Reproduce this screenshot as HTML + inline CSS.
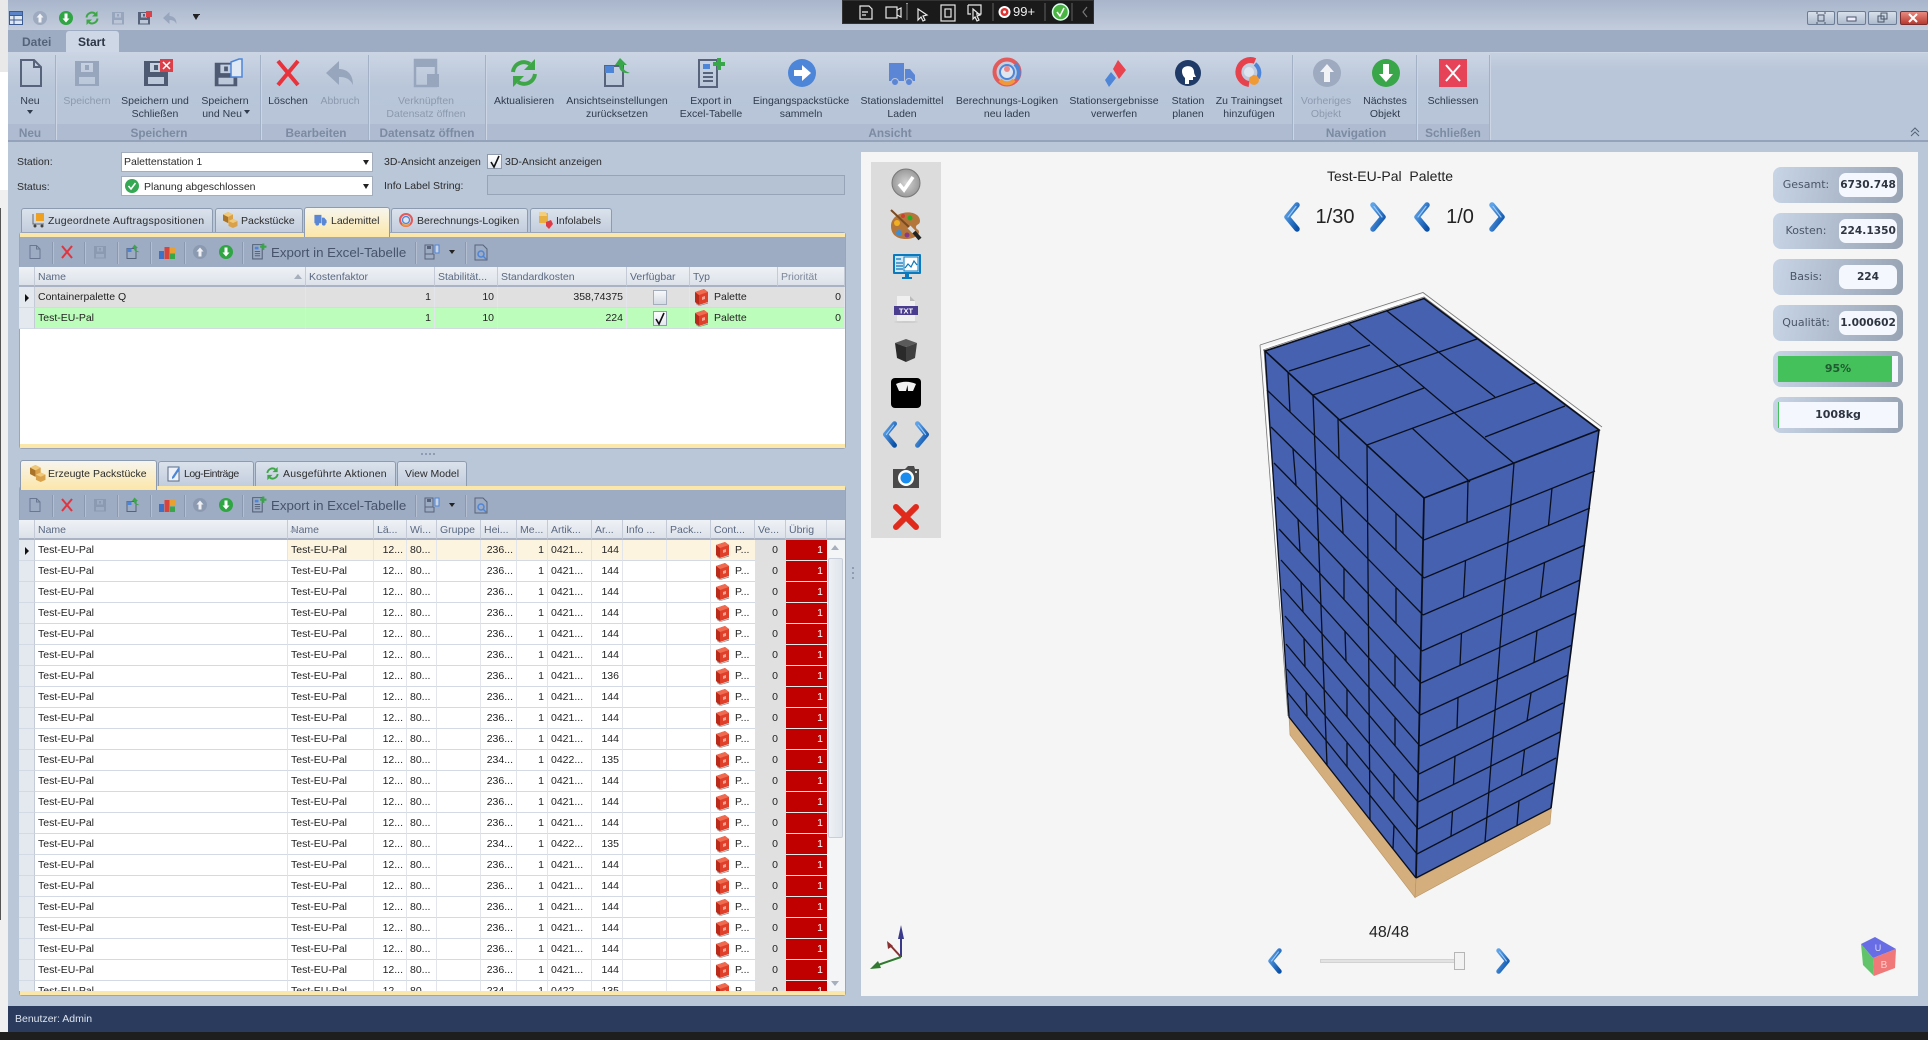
<!DOCTYPE html>
<html lang="de"><head><meta charset="utf-8"><title>Palette</title>
<style>
html,body{margin:0;padding:0;width:1928px;height:1040px;overflow:hidden;background:#bac7d8;font:10.5px "Liberation Sans",sans-serif;color:#2b2b2b}
*{box-sizing:border-box}
.a{position:absolute}
.t{position:absolute;white-space:nowrap;line-height:14px}
svg{position:absolute;overflow:visible}
.rb{position:absolute;top:95px;transform:translateX(-50%);text-align:center;line-height:13px;white-space:nowrap;color:#2f3a4c}
.rb.d{color:#8c99ae}
.gl{position:absolute;top:126px;transform:translateX(-50%);font-weight:bold;font-size:11.8px;color:#7c8aa2;white-space:nowrap;line-height:14px}
.gb{position:absolute;top:124px;height:16px;background:#aebbd0}
.sep{position:absolute;top:55px;height:85px;width:1px;background:#a3b1c7;box-shadow:1px 0 0 #cbd5e3}
.tab{position:absolute;border:1px solid #8d9bb0;border-bottom:0;border-radius:3px 3px 0 0;background:linear-gradient(#dbe2ec,#c2cddd)}
.tab.on{background:linear-gradient(#f6f5ee,#fce7a8);z-index:3}
.tbsep{position:absolute;top:5px;height:22px;width:1px;background:#8a98b0;box-shadow:1px 0 0 #b3bfd1}
table{border-collapse:separate;border-spacing:0;table-layout:fixed;position:absolute;left:0;top:0;width:826px}
th{height:20px;font-weight:normal;text-align:left;padding:1px 3px 0;background:linear-gradient(#eff2f6,#dde2ea);border-right:1px solid #c4cbd7;border-bottom:2px solid #a9b3c3;color:#5a6880;white-space:nowrap;overflow:hidden}
td{height:21px;padding:0 3px;border-right:1px solid #e2e6ec;border-bottom:1px solid #d4dae3;white-space:nowrap;overflow:hidden;color:#222;background:#fff}
td.i{background:#e4e8ef;border-right:1px solid #c4cbd7;padding:0;position:relative}
.r{text-align:right}
tr.f td{background:#fdf4e0}
tr.f td.n{background:#fff}
tr.f td.i{background:#e4e8ef}
td.v,tr.f td.v{background:#e0e0e0;border-right:0;text-align:right;border-bottom:1px solid #e0e0e0;padding-right:8px}
td.u,tr.f td.u{background:#c00000;color:#fff;text-align:right;border-right:0;border-bottom:1px solid #e8e8e8;padding-right:4px}
td.c{padding:0 0 0 24px;position:relative;border-right:0}
.tri{position:absolute;left:6px;top:7px;width:0;height:0;border-left:4px solid #111;border-top:4px solid transparent;border-bottom:4px solid transparent}
.stat{position:absolute;left:1773px;width:130px;height:36px;border-radius:8px;background:linear-gradient(100deg,#c8d5e7,#97a3b3)}
.stat .k{position:absolute;left:0;width:66px;text-align:center;top:11px;font:11px/14px "DejaVu Sans",sans-serif;color:#4a5568}
.stat .w{position:absolute;left:66px;top:6px;width:58px;height:24px;background:#f4f8fe;border-radius:7px;text-align:center;font:bold 10.6px/24px "DejaVu Sans",sans-serif;color:#2e3540;white-space:nowrap;overflow:hidden}
</style></head><body>
<svg width="0" height="0" style="position:absolute">
<defs>
<linearGradient id="cb" x1="0" x2="1" y1="0" y2="1"><stop offset="0" stop-color="#5fa4e8"/><stop offset="1" stop-color="#0a50a8"/></linearGradient>
<symbol id="doc" viewBox="0 0 32 32"><path d="M6 3h13l7 7v19H6zM19 3v7h7" fill="none" stroke="currentColor" stroke-width="2"/></symbol>
<symbol id="fl" viewBox="0 0 32 32"><path fill="currentColor" fill-rule="evenodd" d="M4 4h24v25H4zM10 6v9h12V6zM8 20v7h16v-7zM14 8h4v5h-4z"/></symbol>
<symbol id="back" viewBox="0 0 32 32"><path fill="currentColor" d="M15 4v8c8 0 14 5 14 16-3-6-7-8-14-8v8L2 16z"/></symbol>
<symbol id="up" viewBox="0 0 32 32"><circle cx="16" cy="16" r="14" fill="currentColor"/><path fill="#fff" d="M16 7l7 8h-4v10h-6V15H9z" opacity=".85"/></symbol>
<symbol id="dn" viewBox="0 0 32 32"><circle cx="16" cy="16" r="14" fill="currentColor"/><path fill="#fff" d="M16 25l-7-8h4V7h6v10h4z"/></symbol>
<symbol id="ref" viewBox="0 0 32 32"><g fill="none" stroke="currentColor" stroke-width="4"><path d="M5 15A11 11 0 0 1 22 7"/><path d="M27 17A11 11 0 0 1 10 25"/></g><path fill="currentColor" d="M27 2v11H16zM5 30V19h11z"/></symbol>
<symbol id="view" viewBox="0 0 32 32"><path d="M4 9h18v20H4z" fill="none" stroke="#56637a" stroke-width="2"/><path d="M4 9h9v7H4z" fill="#4d86d9"/><path fill="#3aa64a" d="M19 1l7 7h-4c0 5 2 6 7 8-7 1-11-2-11-8h-4z"/></symbol>
<symbol id="xls" viewBox="0 0 32 32"><path d="M5 3h18v27H5z" fill="none" stroke="#56637a" stroke-width="2"/><path d="M9 7h7v5H9z" fill="#4d86d9"/><path d="M9 16h10M9 20h10M9 24h10" stroke="#56637a" stroke-width="2"/><path fill="#3aa64a" d="M23 1h4v4h4v4h-4v4h-4V9h-4V5h4z"/></symbol>
<symbol id="x" viewBox="0 0 32 32"><path d="M6 4l20 24M26 4L6 28" stroke="currentColor" stroke-width="4" fill="none"/></symbol>
<symbol id="box" viewBox="0 0 15 18"><path fill="#e0402a" d="M1 4l9-3 4 3v10l-9 3-4-3z"/><path fill="#b82a1a" d="M1 4l4 3v10l-4-3z"/><path fill="#f06a50" d="M1 4l9-3 4 3-9 3z"/><path fill="#f5a393" d="M8 9l3-1v3l-3 1z"/><path fill="#888" d="M2 15l3 2.500 9-3v1l-9 2.500-3-2z"/></symbol>
<symbol id="l" viewBox="0 0 20 30"><path d="M15 3L5 15l10 12" fill="none" stroke="url(#cb)" stroke-width="5.500" stroke-linecap="round" stroke-linejoin="round"/><path d="M14 4.500L6 15" fill="none" stroke="#9cc9f5" stroke-width="1.200" stroke-linecap="round"/></symbol>
<symbol id="r" viewBox="0 0 20 30"><path d="M5 3l10 12L5 27" fill="none" stroke="url(#cb)" stroke-width="5.500" stroke-linecap="round" stroke-linejoin="round"/><path d="M6 4.500L14 15" fill="none" stroke="#9cc9f5" stroke-width="1.200" stroke-linecap="round"/></symbol>
<symbol id="pack" viewBox="0 0 16 16"><path fill="#d9a24a" d="M6 0l5 2.500v6L6 11 1 8.500v-6z"/><path fill="#f0c87a" d="M6 0l5 2.500L6 5 1 2.500z"/><path fill="#a9742a" d="M6 5v6L1 8.500v-6z"/><path fill="#d9a24a" d="M11 7l4.500 2v5L11 16l-4.500-2V9z"/><path fill="#f0c87a" d="M11 7l4.500 2L11 11 6.500 9z"/></symbol>
</defs></svg>

<!-- left strip -->
<div class="a" style="left:0;top:0;width:8px;height:72px;background:#e9e9e9"></div>
<div class="a" style="left:0;top:72px;width:8px;height:118px;background:#fff"></div>
<div class="a" style="left:0;top:190px;width:8px;height:842px;background:#f0f0f0"></div>
<div class="a" style="left:0;top:208px;width:1px;height:712px;background:#555"></div>

<!-- title bar -->
<div class="a" style="left:8px;top:0;width:1920px;height:30px;background:linear-gradient(#a8b5cb,#c2ccdc)"></div>
<svg style="left:9px;top:11px" width="14" height="14" viewBox="0 0 14 14"><rect x=".5" y=".5" width="13" height="13" fill="#dfe7f2" stroke="#3c5a92"/><path d="M.5 4.500h13M.5 9h13M5 4.500V14" stroke="#3c5a92"/><rect x="1" y="1" width="12" height="3" fill="#5b83c8"/></svg>
<svg style="left:32px;top:10px;color:#9daabf" width="16" height="16"><use href="#up"/></svg>
<svg style="left:58px;top:10px;color:#2fa544" width="16" height="16"><use href="#dn"/></svg>
<svg style="left:84px;top:10px;color:#3fa648" width="16" height="16"><use href="#ref"/></svg>
<svg style="left:110px;top:10px;color:#98a6bd" width="16" height="16"><use href="#fl"/></svg>
<svg style="left:136px;top:10px;color:#56637a" width="16" height="16"><use href="#fl"/></svg>
<div class="a" style="left:146px;top:11px;width:6px;height:6px;background:#d8434b"></div>
<svg style="left:162px;top:10px;color:#98a6bd" width="16" height="16"><use href="#back"/></svg>
<div class="a" style="left:193px;top:15px;width:0;height:0;border:3px solid transparent;border-top:5px solid #222"></div>
<div class="a" style="left:193px;top:14px;width:7px;height:1px;background:#222"></div>

<!-- dark capture toolbar -->
<div class="a" style="left:842px;top:0;width:252px;height:24px;background:#1a1a1a;border:1px solid #333"></div>
<svg style="left:842px;top:0" width="252" height="24" fill="none" stroke="#e8e8e8" stroke-width="1.200">
<path d="M18 6h9l3 3v10H18zM20 12h6M20 15h4"/>
<rect x="44" y="7" width="11" height="11"/><path d="M55 10l4-2v9l-4-2"/>
<path d="M65 3v17M76 9l9 6-4 1 2 4-2 1-2-4-3 3z" /><rect x="99" y="5" width="14" height="16"/><rect x="103" y="9" width="6" height="8"/>
<path d="M126 5h13v9h-5M126 5v9h3M131 9l7 6-3 1 2 4-2 1-2-4-2 2z"/>
<path d="M65 4v16M151 3v18M203 3v18M230 3v18" stroke="#555"/>
<path d="M245 7l-4 5 4 5" stroke="#777"/></svg>
<svg style="left:997px;top:4px" width="15" height="16" viewBox="0 0 15 16"><circle cx="7.500" cy="8" r="6" fill="#fff"/><circle cx="7.500" cy="8" r="4" fill="#d33"/><circle cx="7.500" cy="8" r="1.500" fill="#fff"/></svg>
<div class="t" style="left:1013px;top:5px;color:#eee;font-size:13px">99+</div>
<svg style="left:1052px;top:3px" width="17" height="18" viewBox="0 0 17 18"><circle cx="8.500" cy="9" r="8" fill="#4bb543" stroke="#dfe" stroke-width="1.500"/><path d="M5 9l3 4 4-8" fill="none" stroke="#fff" stroke-width="1.500"/></svg>

<!-- window buttons -->
<div class="a" style="left:1807px;top:11px;width:28px;height:14px;border:1px solid #6d7c95;background:linear-gradient(#d8e0eb,#aebbce);border-radius:2px"></div>
<div class="a" style="left:1837px;top:11px;width:29px;height:14px;border:1px solid #6d7c95;background:linear-gradient(#d8e0eb,#aebbce);border-radius:2px"></div>
<div class="a" style="left:1868px;top:11px;width:29px;height:14px;border:1px solid #6d7c95;background:linear-gradient(#d8e0eb,#aebbce);border-radius:2px"></div>
<div class="a" style="left:1900px;top:11px;width:28px;height:14px;border:1px solid #7a3030;background:linear-gradient(#e88a80,#b83a30);border-radius:2px"></div>
<svg style="left:1807px;top:11px" width="121" height="14" fill="none" stroke="#4a5568"><rect x="11" y="4" width="6" height="6"/><path d="M9 2h2M17 2h2M9 12h2M17 12h2"/><rect x="40" y="6" width="9" height="4" fill="#eef"/><rect x="71" y="5" width="6" height="6"/><rect x="74" y="2" width="6" height="6"/><path d="M102 3l8 8M110 3l-8 8" stroke="#fff" stroke-width="2"/></svg>

<!-- ribbon tabs row -->
<div class="a" style="left:8px;top:30px;width:1920px;height:22px;background:#9dabc3"></div>
<div class="t" style="left:22px;top:35px;font-weight:bold;font-size:12px;color:#55637a">Datei</div>
<div class="a" style="left:66px;top:31px;width:53px;height:22px;background:#cdd7e5;border-radius:3px 3px 0 0"></div>
<div class="t" style="left:78px;top:35px;font-weight:bold;font-size:12px;color:#2b3545">Start</div>

<!-- ribbon -->
<div class="a" style="left:8px;top:52px;width:1482px;height:88px;background:linear-gradient(#cbd5e4,#b9c6d9 40%,#b7c4d8)"></div>
<div class="a" style="left:1490px;top:52px;width:438px;height:88px;background:linear-gradient(#c6d1e0,#b9c6d9 20%);border-top:1px solid #cdd7e5"></div>
<div class="a" style="left:8px;top:140px;width:1920px;height:2px;background:#94a3ba"></div>
<div class="gb" style="left:8px;width:47px"></div><div class="gb" style="left:57px;width:203px"></div><div class="gb" style="left:262px;width:106px"></div><div class="gb" style="left:370px;width:115px"></div><div class="gb" style="left:487px;width:805px"></div><div class="gb" style="left:1294px;width:122px"></div><div class="gb" style="left:1418px;width:71px"></div>
<div class="sep" style="left:55px"></div><div class="sep" style="left:260px"></div><div class="sep" style="left:368px"></div><div class="sep" style="left:485px"></div><div class="sep" style="left:1292px"></div><div class="sep" style="left:1416px"></div><div class="sep" style="left:1489px"></div>
<div class="gl" style="left:30px">Neu</div><div class="gl" style="left:159px">Speichern</div><div class="gl" style="left:316px">Bearbeiten</div><div class="gl" style="left:427px">Datensatz öffnen</div><div class="gl" style="left:890px">Ansicht</div><div class="gl" style="left:1356px">Navigation</div><div class="gl" style="left:1453px">Schließen</div>

<!-- ribbon icons -->
<svg style="left:15px;top:57px;color:#56637a" width="32" height="32"><use href="#doc"/></svg>
<svg style="left:71px;top:57px;color:#98a6bd" width="32" height="32"><use href="#fl"/></svg>
<svg style="left:140px;top:57px;color:#4d5a72" width="32" height="32"><use href="#fl"/></svg>
<svg style="left:160px;top:59px" width="13" height="13" viewBox="0 0 13 13"><rect width="13" height="13" fill="#dc3f48"/><path d="M3 3l7 7M10 3l-7 7" stroke="#fff" stroke-width="1.500"/></svg>
<svg style="left:211px;top:59px;color:#4d5a72" width="30" height="30"><use href="#fl"/></svg>
<svg style="left:230px;top:58px" width="13" height="20" viewBox="0 0 13 20"><path d="M1 4l8-3h3v18H1z" fill="#dfe8f5" stroke="#4d86d9" stroke-width="1.500"/></svg>
<svg style="left:272px;top:57px;color:#e8323c" width="32" height="32"><use href="#x"/></svg>
<svg style="left:324px;top:57px;color:#98a6bd" width="32" height="32"><use href="#back"/></svg>
<svg style="left:410px;top:57px" width="32" height="32" viewBox="0 0 32 32"><path d="M5 3h21v26H5z" fill="none" stroke="#98a6bd" stroke-width="2.500"/><path d="M5 3h21v7H5z" fill="#98a6bd"/><path d="M17 17h12v13H17z" fill="#98a6bd"/></svg>
<svg style="left:508px;top:57px;color:#3fa648" width="32" height="32"><use href="#ref"/></svg>
<svg style="left:601px;top:57px" width="32" height="32"><use href="#view"/></svg>
<svg style="left:694px;top:57px" width="32" height="32"><use href="#xls"/></svg>
<svg style="left:786px;top:57px" width="32" height="32"><circle cx="16" cy="16" r="14" fill="#4d86d9"/><path fill="#fff" d="M8 13h8V8l9 8-9 8v-5H8z"/></svg>
<svg style="left:886px;top:57px" width="32" height="32" viewBox="0 0 32 32"><path fill="#5b86d6" d="M3 6h15v18H3zM19 12h5l5 6v6H19z"/><circle cx="9" cy="25" r="3.500" fill="#5b86d6" stroke="#b9c6d9"/><circle cx="23" cy="25" r="3.500" fill="#5b86d6" stroke="#b9c6d9"/></svg>
<svg style="left:991px;top:56px" width="32" height="32" viewBox="0 0 32 32"><circle cx="16" cy="16" r="12.500" fill="none" stroke="#e35a5a" stroke-width="4"/><path d="M24 8a12 12 0 0 1 2 15" fill="none" stroke="#4d86d9" stroke-width="4"/><circle cx="16" cy="16" r="7" fill="#dfe6f0" stroke="#4d86d9" stroke-width="2"/><circle cx="16" cy="13" r="3" fill="#e88"/><path d="M9 24a9 9 0 0 0 14 0" fill="none" stroke="#f0983a" stroke-width="4"/></svg>
<svg style="left:1099px;top:57px" width="32" height="32" viewBox="0 0 32 32"><path fill="#e8434f" d="M19 3l8 10-7 9-6-10z"/><path fill="#4f86d8" d="M12 15l5 6-7 9-4-7z"/></svg>
<svg style="left:1172px;top:57px" width="32" height="32" viewBox="0 0 32 32"><circle cx="16" cy="16" r="13" fill="#1f3a66"/><path fill="#fff" d="M10 14c0-6 11-7 12 0 0 3 1 4 2 6h-3v3h-4v4h-4v-6c-2-2-3-4-3-7z"/></svg>
<svg style="left:1233px;top:56px" width="32" height="32" viewBox="0 0 32 32"><path d="M22 5A12 12 0 1 0 16 28" fill="none" stroke="#e5424d" stroke-width="6"/><path d="M22 8a11 11 0 0 1 3 14" fill="none" stroke="#4d86d9" stroke-width="4"/><circle cx="21" cy="24" r="5" fill="#f09a35"/><circle cx="16" cy="16" r="5" fill="#dde5f0"/></svg>
<svg style="left:1311px;top:57px;color:#9daabf" width="32" height="32"><use href="#up"/></svg>
<svg style="left:1370px;top:57px;color:#3aa64a" width="32" height="32"><use href="#dn"/></svg>
<svg style="left:1437px;top:57px" width="32" height="32" viewBox="0 0 32 32"><rect x="2" y="2" width="28" height="28" fill="#e74358"/><path d="M9 8l14 16M23 8L9 24" stroke="#fff" stroke-width="2"/></svg>

<!-- ribbon labels -->
<div class="rb" style="left:30px">Neu</div>
<div class="a" style="left:27px;top:110px;border:3.500px solid transparent;border-top:4px solid #2f3a4c"></div>
<div class="rb d" style="left:87px">Speichern</div>
<div class="rb" style="left:155px">Speichern und<br>Schließen</div>
<div class="rb" style="left:225px">Speichern<br>und Neu &nbsp;</div>
<div class="a" style="left:244px;top:110px;border:3.500px solid transparent;border-top:4px solid #2f3a4c"></div>
<div class="rb" style="left:288px">Löschen</div>
<div class="rb d" style="left:340px">Abbruch</div>
<div class="rb d" style="left:426px">Verknüpften<br>Datensatz öffnen</div>
<div class="rb" style="left:524px">Aktualisieren</div>
<div class="rb" style="left:617px">Ansichtseinstellungen<br>zurücksetzen</div>
<div class="rb" style="left:711px">Export in<br>Excel-Tabelle</div>
<div class="rb" style="left:801px">Eingangspackstücke<br>sammeln</div>
<div class="rb" style="left:902px">Stationslademittel<br>Laden</div>
<div class="rb" style="left:1007px">Berechnungs-Logiken<br>neu laden</div>
<div class="rb" style="left:1114px">Stationsergebnisse<br>verwerfen</div>
<div class="rb" style="left:1188px">Station<br>planen</div>
<div class="rb" style="left:1249px">Zu Trainingset<br>hinzufügen</div>
<div class="rb d" style="left:1326px">Vorheriges<br>Objekt</div>
<div class="rb" style="left:1385px">Nächstes<br>Objekt</div>
<div class="rb" style="left:1453px">Schliessen</div>
<svg style="left:1909px;top:126px" width="12" height="12" fill="none" stroke="#56637a"><path d="M2 6l4-4 4 4M2 10l4-4 4 4"/></svg>

<!-- form -->
<div class="t" style="left:17px;top:155px">Station:</div>
<div class="a" style="left:121px;top:152px;width:252px;height:20px;background:#fff;border:1px solid #a4adbb"></div>
<div class="t" style="left:124px;top:155px">Palettenstation 1</div>
<div class="a" style="left:363px;top:160px;border:3.500px solid transparent;border-top:5px solid #222"></div>
<div class="t" style="left:17px;top:180px">Status:</div>
<div class="a" style="left:121px;top:176px;width:252px;height:20px;background:#fff;border:1px solid #a4adbb"></div>
<svg style="left:125px;top:179px" width="14" height="14" viewBox="0 0 14 14"><circle cx="7" cy="7" r="7" fill="#34a853"/><path d="M3.500 7l2.500 3 4.500-6" fill="none" stroke="#fff" stroke-width="1.600"/></svg>
<div class="t" style="left:144px;top:180px">Planung abgeschlossen</div>
<div class="a" style="left:363px;top:184px;border:3.500px solid transparent;border-top:5px solid #222"></div>
<div class="t" style="left:384px;top:155px">3D-Ansicht anzeigen</div>
<div class="a" style="left:487px;top:154px;width:15px;height:15px;background:linear-gradient(#fff,#e3e8f0);border:1px solid #8f9bad"></div>
<svg style="left:489px;top:155px" width="12" height="13"><path d="M2 7l3 5 5-11" fill="none" stroke="#111" stroke-width="1.600"/></svg>
<div class="t" style="left:505px;top:155px">3D-Ansicht anzeigen</div>
<div class="t" style="left:384px;top:179px">Info Label String:</div>
<div class="a" style="left:487px;top:175px;width:358px;height:20px;background:#b5c2d3;border:1px solid #97a4b7"></div>

<!-- top tabs -->
<div class="a" style="left:19px;top:232px;width:827px;height:217px;background:#fff;border:1px solid #9aa6b8;border-radius:3px"></div>
<div class="a" style="left:20px;top:233px;width:825px;height:4px;background:#fbe7a9"></div>
<div class="a" style="left:20px;top:444px;width:825px;height:4px;background:#fbe7a9"></div>
<div class="tab" style="left:21px;top:208px;width:192px;height:24px"></div>
<div class="tab" style="left:215px;top:208px;width:88px;height:24px"></div>
<div class="tab on" style="left:304px;top:207px;width:86px;height:30px;border-bottom:0"></div>
<div class="tab" style="left:391px;top:208px;width:137px;height:24px"></div>
<div class="tab" style="left:530px;top:208px;width:82px;height:24px"></div>
<svg style="left:31px;top:212px;z-index:4" width="14" height="16" viewBox="0 0 14 16"><path d="M2 2v10h11" fill="none" stroke="#6a6a6a"/><rect x="5" y="1" width="8" height="8" fill="#f0a020"/><circle cx="4" cy="14" r="1.500" fill="#444"/><circle cx="11" cy="14" r="1.500" fill="#444"/></svg>
<div class="t" style="left:48px;top:214px;z-index:4;letter-spacing:.25px">Zugeordnete Auftragspositionen</div>
<svg style="left:222px;top:212px;z-index:4" width="16" height="16"><use href="#pack"/></svg>
<div class="t" style="left:241px;top:214px;z-index:4">Packstücke</div>
<svg style="left:313px;top:212px;z-index:4" width="15" height="15" viewBox="0 0 32 32"><path fill="#5b86d6" d="M3 6h15v18H3zM19 12h5l5 6v6H19z"/><circle cx="9" cy="25" r="4" fill="#5b86d6"/><circle cx="23" cy="25" r="4" fill="#5b86d6"/></svg>
<div class="t" style="left:331px;top:214px;z-index:4;color:#2b2b2b">Lademittel</div>
<svg style="left:398px;top:212px;z-index:4" width="16" height="16" viewBox="0 0 32 32"><circle cx="16" cy="16" r="12" fill="none" stroke="#e35a5a" stroke-width="4"/><circle cx="16" cy="16" r="7" fill="#dfe6f0" stroke="#4d86d9" stroke-width="2.500"/><path d="M9 24a9 9 0 0 0 14 0" fill="none" stroke="#f0983a" stroke-width="4"/></svg>
<div class="t" style="left:417px;top:214px;z-index:4">Berechnungs-Logiken</div>
<svg style="left:538px;top:211px;z-index:4" width="15" height="18" viewBox="0 0 15 18"><path fill="#e8b040" d="M1 2h9v10H1z"/><path fill="#f2cf80" d="M1 1l7 0 1 4H1z"/><path fill="#e03b45" d="M8 11l5-2 2 4-4 5-3-3z"/></svg>
<div class="t" style="left:556px;top:214px;z-index:4">Infolabels</div>

<!-- toolbar 1 -->
<div class="a" style="left:0;top:237px;width:0;height:0">
<div class="a" style="left:20px;top:0;width:825px;height:30px;background:#9dabc3"></div>
<svg style="left:27px;top:7px;color:#6a7790" width="16" height="16"><use href="#doc"/></svg>
<div class="tbsep" style="left:52px"></div>
<svg style="left:59px;top:7px;color:#e0353f" width="16" height="16"><use href="#x"/></svg>
<div class="tbsep" style="left:84px"></div>
<svg style="left:92px;top:7px;color:#8c9ab1" width="16" height="16"><use href="#fl"/></svg>
<div class="tbsep" style="left:117px"></div>
<svg style="left:125px;top:7px" width="16" height="16"><use href="#view"/></svg>
<div class="tbsep" style="left:150px"></div>
<svg style="left:159px;top:7px" width="16" height="16" viewBox="0 0 16 16"><rect x="0" y="7" width="5" height="8" fill="#3c72c8"/><rect x="5.500" y="3" width="5" height="12" fill="#d8433e"/><rect x="11" y="3" width="5" height="6" fill="#e8a030"/><rect x="11" y="9.500" width="5" height="5.500" fill="#3aa64a"/></svg>
<div class="tbsep" style="left:184px"></div>
<svg style="left:192px;top:7px;color:#8c9ab1" width="16" height="16"><use href="#up"/></svg>
<svg style="left:218px;top:7px;color:#2fa544" width="16" height="16"><use href="#dn"/></svg>
<div class="tbsep" style="left:242px"></div>
<svg style="left:250px;top:6px" width="17" height="17"><use href="#xls"/></svg>
<div class="t" style="left:271px;top:7px;font-size:13.300px;line-height:17px;color:#46536a">Export in Excel-Tabelle</div>
<div class="tbsep" style="left:415px"></div>
<svg style="left:424px;top:7px" width="16" height="16" viewBox="0 0 16 16"><path d="M1 1h8v9H1zM1 10v5h9v-5" fill="none" stroke="#56637a"/><path d="M3 2h4v3H3z" fill="#56637a"/><path d="M11 1h4v8h-4z" fill="#c8d3e4" stroke="#4d86d9"/></svg>
<div class="a" style="left:449px;top:13px;border:3px solid transparent;border-top:4px solid #222"></div>
<div class="tbsep" style="left:465px"></div>
<svg style="left:473px;top:7px" width="16" height="17" viewBox="0 0 16 17"><path d="M2 1h8l4 4v11H2z" fill="none" stroke="#56637a"/><circle cx="8" cy="10" r="3" fill="none" stroke="#4d86d9" stroke-width="1.500"/><path d="M10 12l3 3" stroke="#4d86d9" stroke-width="1.500"/></svg>
</div>

<!-- grid 1 -->
<div class="a" style="left:19px;top:267px;width:826px;height:62px;overflow:hidden">
<table><colgroup><col style="width:16px"><col style="width:271px"><col style="width:129px"><col style="width:63px"><col style="width:129px"><col style="width:63px"><col style="width:88px"><col style="width:67px"></colgroup>
<tr><th></th><th>Name</th><th>Kostenfaktor</th><th>Stabilität...</th><th>Standardkosten</th><th>Verfügbar</th><th>Typ</th><th style="color:#7c8799">Priorität</th></tr>
<tr><td class="i"><div class="tri"></div></td><td style="background:#e0e0e0">Containerpalette Q</td><td class="r" style="background:#e0e0e0">1</td><td class="r" style="background:#e0e0e0">10</td><td class="r" style="background:#e0e0e0">358,74375</td><td style="background:#e0e0e0"></td><td class="c" style="background:#e0e0e0">Palette</td><td class="r" style="background:#e0e0e0">0</td></tr>
<tr><td class="i"></td><td style="background:#bdfdbb">Test-EU-Pal</td><td class="r" style="background:#bdfdbb">1</td><td class="r" style="background:#bdfdbb">10</td><td class="r" style="background:#bdfdbb">224</td><td style="background:#bdfdbb"></td><td class="c" style="background:#bdfdbb">Palette</td><td class="r" style="background:#bdfdbb">0</td></tr>
</table></div>
<div class="a" style="left:653px;top:290px;width:14px;height:15px;background:linear-gradient(#f7f8fa,#d4dae4);border:1px solid #a4adbb"></div>
<div class="a" style="left:653px;top:311px;width:14px;height:15px;background:linear-gradient(#fff,#e3e8f0);border:1px solid #8f9bad"></div>
<svg style="left:654px;top:312px" width="12" height="13"><path d="M2 7l3 5 5-11" fill="none" stroke="#111" stroke-width="1.600"/></svg>
<div class="a" style="left:294px;top:274px;border:4px solid transparent;border-bottom:5px solid #a7afbd;border-top:0"></div>
<svg style="left:694px;top:288px" width="15" height="18"><use href="#box"/></svg>
<svg style="left:694px;top:309px" width="15" height="18"><use href="#box"/></svg>

<!-- splitter dots -->
<div class="a" style="left:421px;top:453px;width:14px;height:2px;background:repeating-linear-gradient(90deg,#8e9bb0 0 2px,transparent 2px 4px)"></div>
<div class="a" style="left:852px;top:567px;width:2px;height:14px;background:repeating-linear-gradient(#8e9bb0 0 2px,transparent 2px 5px)"></div>

<!-- bottom tabs -->
<div class="a" style="left:19px;top:486px;width:827px;height:510px;background:#fff;border:1px solid #9aa6b8;border-radius:3px"></div>
<div class="a" style="left:20px;top:486px;width:825px;height:4px;background:#fbe7a9"></div>
<div class="a" style="left:20px;top:991px;width:825px;height:4px;background:#fbe7a9"></div>
<div class="tab on" style="left:20px;top:460px;width:137px;height:30px;z-index:3"></div>
<div class="tab" style="left:158px;top:461px;width:96px;height:25px"></div>
<div class="tab" style="left:255px;top:461px;width:141px;height:25px"></div>
<div class="tab" style="left:397px;top:461px;width:70px;height:25px"></div>
<svg style="left:29px;top:465px;z-index:4" width="17" height="17"><use href="#pack"/></svg>
<div class="t" style="left:48px;top:467px;z-index:4">Erzeugte Packstücke</div>
<svg style="left:167px;top:465px;z-index:4" width="14" height="17" viewBox="0 0 14 17"><rect x="1" y="2" width="11" height="14" fill="#eef2f8" stroke="#5a6a84"/><path d="M5 12l6-9 2 1-6 9-2 1z" fill="#4d86d9"/></svg>
<div class="t" style="left:184px;top:467px;z-index:4;letter-spacing:-.45px">Log-Einträge</div>
<svg style="left:265px;top:465px;z-index:4;color:#3fa648" width="15" height="17"><use href="#ref"/></svg>
<div class="t" style="left:283px;top:467px;z-index:4;letter-spacing:.2px">Ausgeführte Aktionen</div>
<div class="t" style="left:405px;top:467px;z-index:4">View Model</div>

<!-- toolbar 2 -->
<div class="a" style="left:0;top:490px;width:0;height:0">
<div class="a" style="left:20px;top:0;width:825px;height:30px;background:#9dabc3"></div>
<svg style="left:27px;top:7px;color:#6a7790" width="16" height="16"><use href="#doc"/></svg>
<div class="tbsep" style="left:52px"></div>
<svg style="left:59px;top:7px;color:#e0353f" width="16" height="16"><use href="#x"/></svg>
<div class="tbsep" style="left:84px"></div>
<svg style="left:92px;top:7px;color:#8c9ab1" width="16" height="16"><use href="#fl"/></svg>
<div class="tbsep" style="left:117px"></div>
<svg style="left:125px;top:7px" width="16" height="16"><use href="#view"/></svg>
<div class="tbsep" style="left:150px"></div>
<svg style="left:159px;top:7px" width="16" height="16" viewBox="0 0 16 16"><rect x="0" y="7" width="5" height="8" fill="#3c72c8"/><rect x="5.500" y="3" width="5" height="12" fill="#d8433e"/><rect x="11" y="3" width="5" height="6" fill="#e8a030"/><rect x="11" y="9.500" width="5" height="5.500" fill="#3aa64a"/></svg>
<div class="tbsep" style="left:184px"></div>
<svg style="left:192px;top:7px;color:#8c9ab1" width="16" height="16"><use href="#up"/></svg>
<svg style="left:218px;top:7px;color:#2fa544" width="16" height="16"><use href="#dn"/></svg>
<div class="tbsep" style="left:242px"></div>
<svg style="left:250px;top:6px" width="17" height="17"><use href="#xls"/></svg>
<div class="t" style="left:271px;top:7px;font-size:13.300px;line-height:17px;color:#46536a">Export in Excel-Tabelle</div>
<div class="tbsep" style="left:415px"></div>
<svg style="left:424px;top:7px" width="16" height="16" viewBox="0 0 16 16"><path d="M1 1h8v9H1zM1 10v5h9v-5" fill="none" stroke="#56637a"/><path d="M3 2h4v3H3z" fill="#56637a"/><path d="M11 1h4v8h-4z" fill="#c8d3e4" stroke="#4d86d9"/></svg>
<div class="a" style="left:449px;top:13px;border:3px solid transparent;border-top:4px solid #222"></div>
<div class="tbsep" style="left:465px"></div>
<svg style="left:473px;top:7px" width="16" height="17" viewBox="0 0 16 17"><path d="M2 1h8l4 4v11H2z" fill="none" stroke="#56637a"/><circle cx="8" cy="10" r="3" fill="none" stroke="#4d86d9" stroke-width="1.500"/><path d="M10 12l3 3" stroke="#4d86d9" stroke-width="1.500"/></svg>
</div>

<!-- grid 2 -->
<div class="a" style="left:19px;top:520px;width:826px;height:471px;overflow:hidden;background:#fff">
<table style="width:826px"><colgroup><col style="width:16px"><col style="width:253px"><col style="width:86px"><col style="width:33px"><col style="width:30px"><col style="width:44px"><col style="width:36px"><col style="width:31px"><col style="width:44px"><col style="width:31px"><col style="width:44px"><col style="width:44px"><col style="width:44px"><col style="width:31px"><col style="width:41px"><col style="width:18px"></colgroup>
<tr><th></th><th>Name</th><th>Name</th><th>Lä...</th><th>Wi...</th><th>Gruppe</th><th>Hei...</th><th>Me...</th><th>Artik...</th><th>Ar...</th><th>Info ...</th><th>Pack...</th><th>Cont...</th><th>Ve...</th><th>Übrig</th><th style="border-right:0"></th></tr>
<tr class="f"><td class="i"><div class="tri"></div></td><td class="n">Test-EU-Pal</td><td>Test-EU-Pal</td><td class="r">12...</td><td>80...</td><td></td><td class="r">236...</td><td class="r">1</td><td>0421...</td><td class="r">144</td><td></td><td></td><td class="c">P...</td><td class="v">0</td><td class="u">1</td><td style="border:0;background:#fff"></td></tr>
<tr><td class="i"></td><td>Test-EU-Pal</td><td>Test-EU-Pal</td><td class="r">12...</td><td>80...</td><td></td><td class="r">236...</td><td class="r">1</td><td>0421...</td><td class="r">144</td><td></td><td></td><td class="c">P...</td><td class="v">0</td><td class="u">1</td><td style="border:0"></td></tr>
<tr><td class="i"></td><td>Test-EU-Pal</td><td>Test-EU-Pal</td><td class="r">12...</td><td>80...</td><td></td><td class="r">236...</td><td class="r">1</td><td>0421...</td><td class="r">144</td><td></td><td></td><td class="c">P...</td><td class="v">0</td><td class="u">1</td><td style="border:0"></td></tr>
<tr><td class="i"></td><td>Test-EU-Pal</td><td>Test-EU-Pal</td><td class="r">12...</td><td>80...</td><td></td><td class="r">236...</td><td class="r">1</td><td>0421...</td><td class="r">144</td><td></td><td></td><td class="c">P...</td><td class="v">0</td><td class="u">1</td><td style="border:0"></td></tr>
<tr><td class="i"></td><td>Test-EU-Pal</td><td>Test-EU-Pal</td><td class="r">12...</td><td>80...</td><td></td><td class="r">236...</td><td class="r">1</td><td>0421...</td><td class="r">144</td><td></td><td></td><td class="c">P...</td><td class="v">0</td><td class="u">1</td><td style="border:0"></td></tr>
<tr><td class="i"></td><td>Test-EU-Pal</td><td>Test-EU-Pal</td><td class="r">12...</td><td>80...</td><td></td><td class="r">236...</td><td class="r">1</td><td>0421...</td><td class="r">144</td><td></td><td></td><td class="c">P...</td><td class="v">0</td><td class="u">1</td><td style="border:0"></td></tr>
<tr><td class="i"></td><td>Test-EU-Pal</td><td>Test-EU-Pal</td><td class="r">12...</td><td>80...</td><td></td><td class="r">236...</td><td class="r">1</td><td>0421...</td><td class="r">136</td><td></td><td></td><td class="c">P...</td><td class="v">0</td><td class="u">1</td><td style="border:0"></td></tr>
<tr><td class="i"></td><td>Test-EU-Pal</td><td>Test-EU-Pal</td><td class="r">12...</td><td>80...</td><td></td><td class="r">236...</td><td class="r">1</td><td>0421...</td><td class="r">144</td><td></td><td></td><td class="c">P...</td><td class="v">0</td><td class="u">1</td><td style="border:0"></td></tr>
<tr><td class="i"></td><td>Test-EU-Pal</td><td>Test-EU-Pal</td><td class="r">12...</td><td>80...</td><td></td><td class="r">236...</td><td class="r">1</td><td>0421...</td><td class="r">144</td><td></td><td></td><td class="c">P...</td><td class="v">0</td><td class="u">1</td><td style="border:0"></td></tr>
<tr><td class="i"></td><td>Test-EU-Pal</td><td>Test-EU-Pal</td><td class="r">12...</td><td>80...</td><td></td><td class="r">236...</td><td class="r">1</td><td>0421...</td><td class="r">144</td><td></td><td></td><td class="c">P...</td><td class="v">0</td><td class="u">1</td><td style="border:0"></td></tr>
<tr><td class="i"></td><td>Test-EU-Pal</td><td>Test-EU-Pal</td><td class="r">12...</td><td>80...</td><td></td><td class="r">234...</td><td class="r">1</td><td>0422...</td><td class="r">135</td><td></td><td></td><td class="c">P...</td><td class="v">0</td><td class="u">1</td><td style="border:0"></td></tr>
<tr><td class="i"></td><td>Test-EU-Pal</td><td>Test-EU-Pal</td><td class="r">12...</td><td>80...</td><td></td><td class="r">236...</td><td class="r">1</td><td>0421...</td><td class="r">144</td><td></td><td></td><td class="c">P...</td><td class="v">0</td><td class="u">1</td><td style="border:0"></td></tr>
<tr><td class="i"></td><td>Test-EU-Pal</td><td>Test-EU-Pal</td><td class="r">12...</td><td>80...</td><td></td><td class="r">236...</td><td class="r">1</td><td>0421...</td><td class="r">144</td><td></td><td></td><td class="c">P...</td><td class="v">0</td><td class="u">1</td><td style="border:0"></td></tr>
<tr><td class="i"></td><td>Test-EU-Pal</td><td>Test-EU-Pal</td><td class="r">12...</td><td>80...</td><td></td><td class="r">236...</td><td class="r">1</td><td>0421...</td><td class="r">144</td><td></td><td></td><td class="c">P...</td><td class="v">0</td><td class="u">1</td><td style="border:0"></td></tr>
<tr><td class="i"></td><td>Test-EU-Pal</td><td>Test-EU-Pal</td><td class="r">12...</td><td>80...</td><td></td><td class="r">234...</td><td class="r">1</td><td>0422...</td><td class="r">135</td><td></td><td></td><td class="c">P...</td><td class="v">0</td><td class="u">1</td><td style="border:0"></td></tr>
<tr><td class="i"></td><td>Test-EU-Pal</td><td>Test-EU-Pal</td><td class="r">12...</td><td>80...</td><td></td><td class="r">236...</td><td class="r">1</td><td>0421...</td><td class="r">144</td><td></td><td></td><td class="c">P...</td><td class="v">0</td><td class="u">1</td><td style="border:0"></td></tr>
<tr><td class="i"></td><td>Test-EU-Pal</td><td>Test-EU-Pal</td><td class="r">12...</td><td>80...</td><td></td><td class="r">236...</td><td class="r">1</td><td>0421...</td><td class="r">144</td><td></td><td></td><td class="c">P...</td><td class="v">0</td><td class="u">1</td><td style="border:0"></td></tr>
<tr><td class="i"></td><td>Test-EU-Pal</td><td>Test-EU-Pal</td><td class="r">12...</td><td>80...</td><td></td><td class="r">236...</td><td class="r">1</td><td>0421...</td><td class="r">144</td><td></td><td></td><td class="c">P...</td><td class="v">0</td><td class="u">1</td><td style="border:0"></td></tr>
<tr><td class="i"></td><td>Test-EU-Pal</td><td>Test-EU-Pal</td><td class="r">12...</td><td>80...</td><td></td><td class="r">236...</td><td class="r">1</td><td>0421...</td><td class="r">144</td><td></td><td></td><td class="c">P...</td><td class="v">0</td><td class="u">1</td><td style="border:0"></td></tr>
<tr><td class="i"></td><td>Test-EU-Pal</td><td>Test-EU-Pal</td><td class="r">12...</td><td>80...</td><td></td><td class="r">236...</td><td class="r">1</td><td>0421...</td><td class="r">144</td><td></td><td></td><td class="c">P...</td><td class="v">0</td><td class="u">1</td><td style="border:0"></td></tr>
<tr><td class="i"></td><td>Test-EU-Pal</td><td>Test-EU-Pal</td><td class="r">12...</td><td>80...</td><td></td><td class="r">236...</td><td class="r">1</td><td>0421...</td><td class="r">144</td><td></td><td></td><td class="c">P...</td><td class="v">0</td><td class="u">1</td><td style="border:0"></td></tr>
<tr><td class="i"></td><td>Test-EU-Pal</td><td>Test-EU-Pal</td><td class="r">12...</td><td>80...</td><td></td><td class="r">234...</td><td class="r">1</td><td>0422...</td><td class="r">135</td><td></td><td></td><td class="c">P...</td><td class="v">0</td><td class="u">1</td><td style="border:0"></td></tr>
</table>
<svg style="left:696px;top:21px" width="15" height="460" viewBox="0 0 15 460">
<use href="#box" width="15" height="18" y="0"/><use href="#box" width="15" height="18" y="21"/><use href="#box" width="15" height="18" y="42"/><use href="#box" width="15" height="18" y="63"/><use href="#box" width="15" height="18" y="84"/><use href="#box" width="15" height="18" y="105"/><use href="#box" width="15" height="18" y="126"/><use href="#box" width="15" height="18" y="147"/><use href="#box" width="15" height="18" y="168"/><use href="#box" width="15" height="18" y="189"/><use href="#box" width="15" height="18" y="210"/><use href="#box" width="15" height="18" y="231"/><use href="#box" width="15" height="18" y="252"/><use href="#box" width="15" height="18" y="273"/><use href="#box" width="15" height="18" y="294"/><use href="#box" width="15" height="18" y="315"/><use href="#box" width="15" height="18" y="336"/><use href="#box" width="15" height="18" y="357"/><use href="#box" width="15" height="18" y="378"/><use href="#box" width="15" height="18" y="399"/><use href="#box" width="15" height="18" y="420"/><use href="#box" width="15" height="18" y="441"/>
</svg>
<div class="a" style="left:271px;top:7px;border:4px solid transparent;border-bottom:5px solid #a7afbd;border-top:0"></div>
<div class="a" style="left:808px;top:20px;width:18px;height:451px;background:#f4f5f7"></div>
<div class="a" style="left:809px;top:38px;width:15px;height:280px;background:linear-gradient(90deg,#eef1f5,#dfe4ec);border:1px solid #c8cfda;border-radius:2px"></div>
<div class="a" style="left:812px;top:25px;border:4px solid transparent;border-bottom:5px solid #a7afbd;border-top:0"></div>
<div class="a" style="left:812px;top:461px;border:4px solid transparent;border-top:5px solid #a7afbd;border-bottom:0"></div>
</div>

<!-- status bar -->
<div class="a" style="left:8px;top:1006px;width:1920px;height:26px;background:#2a3b5e"></div>
<div class="t" style="left:15px;top:1012px;color:#dfe5ee">Benutzer: Admin</div>
<div class="a" style="left:0;top:1032px;width:1928px;height:8px;background:#1e1e1e"></div>

<!-- right panel -->
<div class="a" style="left:861px;top:152px;width:1057px;height:844px;background:#f5f5f5"></div>
<div class="a" style="left:871px;top:162px;width:70px;height:376px;background:#dcdcdc"></div>

<!-- sidebar icons -->
<svg style="left:891px;top:168px" width="30" height="30" viewBox="0 0 30 30"><defs><radialGradient id="gc"><stop offset="0" stop-color="#d4d4d4"/><stop offset="1" stop-color="#9a9a9a"/></radialGradient></defs><circle cx="15" cy="15" r="14" fill="url(#gc)" stroke="#777"/><path d="M8 16l5 6 9-13" fill="none" stroke="#fff" stroke-width="3.500"/></svg>
<svg style="left:891px;top:210px" width="30" height="30" viewBox="0 0 30 30"><path fill="#b5763c" d="M12 3c8-2 17 1 17 8 0 4-4 3-4 6s3 2 3 5-5 7-13 7C5 29 0 24 0 16 0 9 6 4 12 3z"/><circle cx="19" cy="8" r="2.500" fill="#22b022"/><circle cx="6" cy="13" r="3" fill="#f0b020"/><circle cx="8" cy="23" r="3" fill="#3a90d8"/><circle cx="16" cy="25" r="2.500" fill="#8a3a8a"/><circle cx="12" cy="6" r="2" fill="#d04030"/><path d="M0 0l19 18" stroke="#7a4a20" stroke-width="2"/><path d="M18 17l5 5" stroke="#ddd" stroke-width="4"/><path d="M23 22l6 7" stroke="#222" stroke-width="4"/></svg>
<svg style="left:893px;top:254px" width="28" height="26" viewBox="0 0 28 26"><rect x="0" y="0" width="28" height="20" rx="1" fill="#0b79bd"/><rect x="2" y="2" width="24" height="16" fill="#cfe6f5"/><path d="M3 5h5M3 9h7M3 12h7M3 15h7" stroke="#0b79bd" stroke-width="1.200"/><path d="M11 3h14v14H11z" fill="#fff" stroke="#0b79bd"/><path d="M12 14l3-4 3 3 3-6 3 4" fill="none" stroke="#0b79bd" stroke-width="1.200"/><path d="M12 20h4v3h3v2H9v-2h3z" fill="#0b79bd"/></svg>
<svg style="left:892px;top:295px" width="28" height="28" viewBox="0 0 28 28"><path d="M5 1h13l5 5v20H5z" fill="#f0f0f0"/><path d="M18 1l5 5h-5z" fill="#bbb"/><rect x="2" y="11" width="24" height="9" fill="#4a3d8f"/><text x="14" y="18.500" text-anchor="middle" font-family="Liberation Sans" font-size="7.500" font-weight="bold" fill="#fff">TXT</text><ellipse cx="14" cy="27" rx="12" ry="1" fill="#ccc"/></svg>
<svg style="left:894px;top:338px" width="24" height="26" viewBox="0 0 24 26"><path d="M12 1l11 4-11 4L1 5z" fill="#5a5a5a"/><path d="M1 5l11 4v15L3 20z" fill="#2a2a2a"/><path d="M23 5l-11 4v15l9-4z" fill="#3f3f3f"/></svg>
<svg style="left:891px;top:378px" width="30" height="30" viewBox="0 0 30 30"><rect width="30" height="30" rx="4" fill="#000"/><path d="M5 6c6-3 14-3 20 0l-3 7H8z" fill="#f0f0f0"/><path d="M15 13l1.500-6 .5 6z" fill="#000"/></svg>
<svg style="left:881px;top:421px" width="18" height="27"><use href="#l"/></svg>
<svg style="left:913px;top:421px" width="18" height="27"><use href="#r"/></svg>
<svg style="left:893px;top:464px" width="26" height="25" viewBox="0 0 26 25"><path d="M0 5h12l3-3h6l1 3h4v19H0z" fill="#4a4a4a"/><circle cx="13" cy="14" r="8" fill="#fff"/><circle cx="13" cy="14" r="5.500" fill="#1a8cf0"/><circle cx="23" cy="8" r="1" fill="#fff"/></svg>
<svg style="left:892px;top:503px" width="28" height="28" viewBox="0 0 28 28"><path d="M4 4l20 20M24 4L4 24" stroke="#e02a1c" stroke-width="6" stroke-linecap="round"/></svg>

<!-- title and nav -->
<div class="t" style="left:1390px;top:169px;transform:translateX(-50%);font-size:14px;color:#222;white-space:pre">Test-EU-Pal  Palette</div>
<svg style="left:1282px;top:202px" width="20" height="30"><use href="#l"/></svg>
<div class="t" style="left:1315px;top:205px;width:40px;text-align:center;font-size:20px;line-height:24px;color:#222">1/30</div>
<svg style="left:1368px;top:202px" width="20" height="30"><use href="#r"/></svg>
<svg style="left:1412px;top:202px" width="20" height="30"><use href="#l"/></svg>
<div class="t" style="left:1440px;top:205px;width:40px;text-align:center;font-size:20px;line-height:24px;color:#222">1/0</div>
<svg style="left:1487px;top:202px" width="20" height="30"><use href="#r"/></svg>

<!-- stats -->
<div class="stat" style="top:167px"><div class="k">Gesamt:</div><div class="w">6730.748</div></div>
<div class="stat" style="top:213px"><div class="k">Kosten:</div><div class="w">224.1350</div></div>
<div class="stat" style="top:259px"><div class="k">Basis:</div><div class="w">224</div></div>
<div class="stat" style="top:305px"><div class="k">Qualität:</div><div class="w">1.000602</div></div>
<div class="stat" style="top:351px"><div class="a" style="left:5px;top:5px;width:120px;height:26px;background:#f4f8fe"></div><div class="a" style="left:5px;top:5px;width:114px;height:26px;background:#44c15b"></div><div class="a" style="left:0;top:11px;width:130px;text-align:center;font:bold 11px/14px 'DejaVu Sans',sans-serif;color:#205a30">95%</div></div>
<div class="stat" style="top:397px"><div class="a" style="left:5px;top:5px;width:120px;height:26px;background:#f4f8fe;border-left:1px solid #44c15b"></div><div class="a" style="left:0;top:11px;width:130px;text-align:center;font:bold 11px/14px 'DejaVu Sans',sans-serif;color:#2e3540">1008kg</div></div>

<!-- 3D pallet -->
<svg style="left:0;top:0" width="1928" height="1040" viewBox="0 0 1928 1040">
<path d="M1262 348L1423 294L1601 428L1599 432L1424 300L1266 352L1291 716L1288 716z" fill="#fff"/>
<path d="M1260 345L1423 292.500L1602 427M1263 350L1424 297L1600 430M1260 345L1288 716M1264 350L1290 716" fill="none" stroke="#777" stroke-width=".8"/>
<path d="M1289 717L1290 735L1415 897.500L1416 879z" fill="#d4ae7c" stroke="#b79466" stroke-width=".6"/>
<path d="M1416 879L1415 897.500L1550 824L1551.500 807.500z" fill="#d4ae7c" stroke="#b79466" stroke-width=".6"/>
<path d="M1265 351L1424 498L1416 878L1289 717z" fill="#4561b0"/>
<path d="M1424 498L1599 430L1551 808L1416 878z" fill="#4561b0"/>
<path d="M1424 298.500L1265 351L1424 498L1599 430z" fill="#4561b0"/>
<g fill="none" stroke="#0a0f1e" stroke-width="1.300">
<path d="M1424 298.500L1599 430L1424 498L1265 351z" stroke-width="1.600"/>
<path d="M1348 323L1513.500 463M1387 311L1495 397M1289 371L1370 345M1313 395L1477 339M1339 420L1424 388M1367 445L1535 383M1412 428L1470 482M1485 437L1565 406"/>
<path d="M1424 498L1416 878" stroke-width="1.800"/>
<path d="M1599 430L1551 808" stroke-width="1.600"/>
<path d="M1416 878L1551 808"/>
<path d="M1265 351L1289 717L1416 878"/>
<path d="M1424 540L1595 471M1424 578L1590 508M1423 615L1585 545M1422 651L1580 580M1421 683L1576 613M1420 715L1572 645M1420 746L1568 675M1419 774L1563 703M1418 802L1560 732M1418 829L1556 758M1417 854L1553 783"/>
<path d="M1514 463L1485 842"/>
<path d="M1468 481L1467 523M1465.500 560.500L1463.500 597.500M1461.500 633L1460 665.500M1458 697.500L1457 728M1455 756L1453.500 784.500M1452.500 811L1451 836"/>
<path d="M1552 488L1548.500 525.500M1544.500 562.500L1540.500 598M1537 630.500L1534 662.500M1531 693L1527 721M1524.500 749.500L1521.500 776M1519 801L1517 825.500"/>
<path d="M1267 390L1424 540M1271 427L1424 578M1274 463L1423 615M1277 497L1422 651M1279 529L1421 683M1281 560L1420 715M1283 589L1420 746M1285 616L1419 774M1286 644L1418 802M1287 669L1418 829M1288 693L1417 854"/>
<path d="M1313 395L1327 765M1367 445L1370 820"/>
<path d="M1288 372L1290 412M1293 449L1296 485M1298 519L1300 551M1301 582L1303 612M1304 639L1305 667M1306 692L1307 716"/>
<path d="M1338 419L1339 459M1341 496L1343 533M1344 568L1344 600M1345 631L1346 661M1347 689L1347 717M1347 743L1347 767"/>
<path d="M1396 513L1396 551M1396 588L1396 623M1395 655L1395 687M1395 718L1395 746M1394 774L1394 800M1394 825L1393 849"/>
</g>
<g fill="none" stroke-width="2">
<path d="M901 957V935" stroke="#3a3a8a"/><path d="M901 957L890 945" stroke="#8a3030"/><path d="M901 957L878 965" stroke="#2f7a2f"/>
</g>
<path d="M901 925l-3 14h6z" fill="#3a3a8a"/><path d="M887 941l1 8 5-3z" fill="#8a3030"/><path d="M870 969l11-1-3-7z" fill="#2f7a2f"/>
<path d="M1875 937L1896 949L1873 958L1861 944z" fill="#686de6"/>
<path d="M1873 958L1896 949L1895 968L1874 976z" fill="#f07878"/>
<path d="M1861 944L1873 958L1874 976L1863 965z" fill="#62c46a"/>
<text x="1884" y="968" text-anchor="middle" font-family="Liberation Sans" font-size="10" fill="#ffd0d0">B</text>
<text x="1878" y="951" text-anchor="middle" font-family="Liberation Sans" font-size="9" fill="#dde">U</text>
</svg>

<!-- step nav -->
<div class="t" style="left:1389px;top:924px;transform:translateX(-50%);font-size:16px;line-height:18px;color:#222">48/48</div>
<svg style="left:1266px;top:948px" width="18" height="26"><use href="#l"/></svg>
<div class="a" style="left:1320px;top:959px;width:135px;height:4px;background:#e2e2e2;border:1px solid #d2d2d2"></div>
<div class="a" style="left:1454px;top:952px;width:11px;height:18px;background:#f2f2f2;border:1px solid #b5b5b5"></div>
<svg style="left:1494px;top:948px" width="18" height="26"><use href="#r"/></svg>
</body></html>
